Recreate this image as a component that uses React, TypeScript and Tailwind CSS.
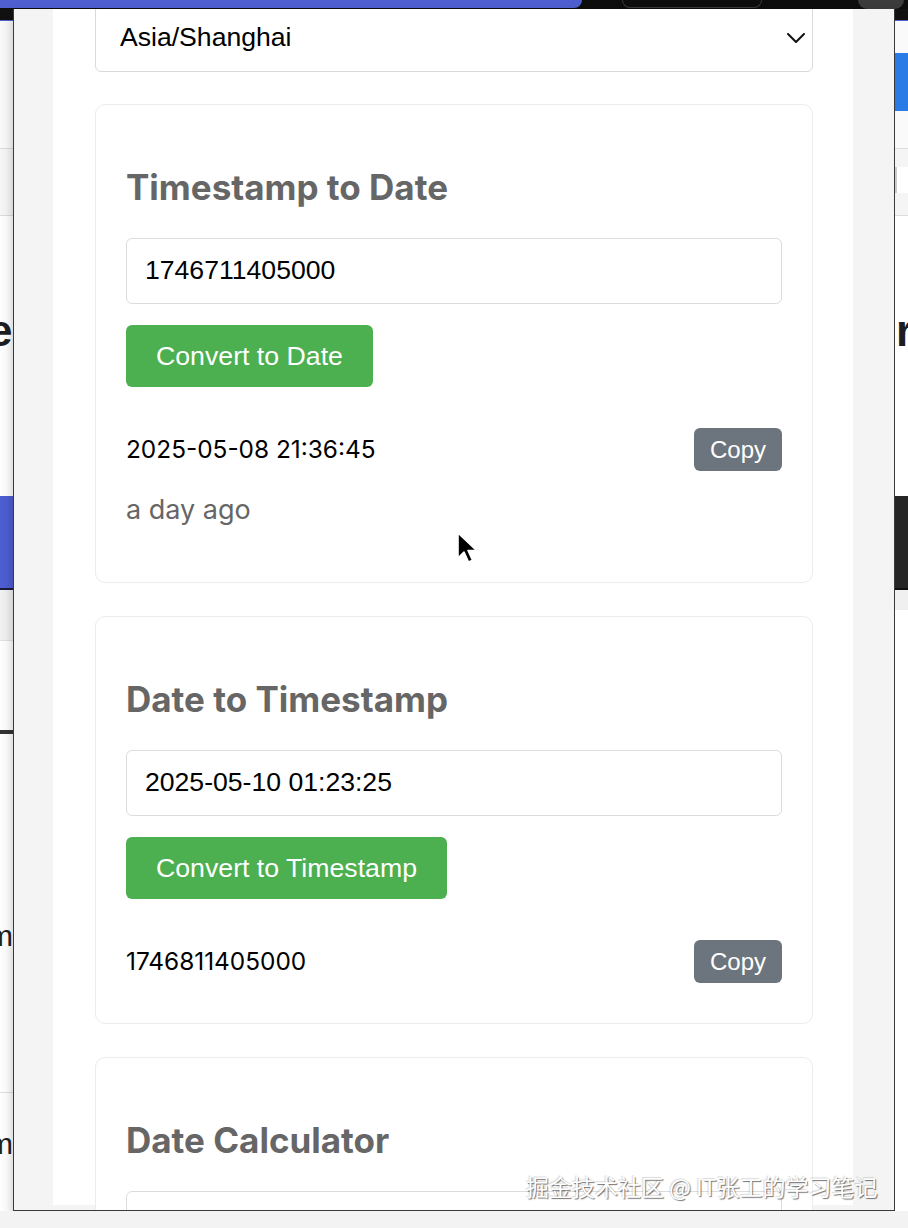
import React from 'react';

const ui = "font-['Inter','Noto_Sans',sans-serif]";
const ctl = "font-['Liberation_Sans',Arial,sans-serif]";

// thin slice of the page that sits behind the popup (left edge)
const LeftStrip: React.FC = () => (
  <div className="w-[13px] shrink-0 flex flex-col overflow-hidden bg-white">
    <div className="h-[11px] bg-[#111]" />
    <div className="h-[1px] bg-[#4f5fd0]" />
    <div className="h-[127px] bg-[#fafafa]" />
    <div className="h-[1px] bg-[#dcdcdc]" />
    <div className="h-[66px] bg-[#f7f7f7]" />
    <div className="h-[1px] bg-[#dcdcdc]" />
    <div className="h-[92px] bg-white" />
    <div className="h-[46px] bg-white overflow-hidden">
      <span className="block -ml-[12px] leading-[46px] text-[44px] font-bold text-[#1d1d22] font-['Liberation_Sans',sans-serif]">e</span>
    </div>
    <div className="h-[142px] bg-white" />
    <div className="h-[92px] bg-[#4e5ed3]" />
    <div className="h-[2px] bg-[#1b1b3a]" />
    <div className="h-[50px] bg-[#f2f2f2]" />
    <div className="h-[1px] bg-[#e2e2e2]" />
    <div className="h-[89px] bg-white" />
    <div className="h-[4px] bg-[#333]" />
    <div className="h-[182px] bg-white" />
    <div className="h-[40px] overflow-hidden">
      <span className="block -ml-[12px] leading-[40px] text-[30px] text-[#222] font-['Liberation_Sans',sans-serif]">m</span>
    </div>
    <div className="h-[136px] bg-white" />
    <div className="h-[1px] bg-[#e0e0e0]" />
    <div className="h-[31px] bg-white" />
    <div className="h-[40px] overflow-hidden">
      <span className="block -ml-[12px] leading-[40px] text-[30px] text-[#222] font-['Liberation_Sans',sans-serif]">m</span>
    </div>
    <div className="flex-1 bg-white" />
  </div>
);

const RightStrip: React.FC = () => (
  <div className="w-[13px] shrink-0 flex flex-col overflow-hidden bg-white">
    <div className="h-[11px] bg-[#111]" />
    <div className="h-[1px] bg-[#4f5fd0]" />
    <div className="h-[32px] bg-[#fafafa]" />
    <div className="h-[58px] bg-[#2b7be6]" />
    <div className="h-[37px] bg-[#fafafa]" />
    <div className="h-[1px] bg-[#dcdcdc]" />
    <div className="h-[18px] bg-[#f5f5f5]" />
    <div className="h-[26px] w-[2px] bg-[#ccc]" />
    <div className="h-[22px] bg-[#f5f5f5]" />
    <div className="h-[1px] bg-[#dcdcdc]" />
    <div className="h-[92px] bg-white" />
    <div className="h-[46px] overflow-hidden">
      <span className="block ml-[1px] leading-[46px] text-[44px] font-bold text-[#1d1d22] font-['Liberation_Sans',sans-serif]">r</span>
    </div>
    <div className="h-[142px] bg-white" />
    <div className="h-[92px] bg-[#262626]" />
    <div className="h-[2px] bg-[#111]" />
    <div className="h-[20px] bg-[#f0f0f0]" />
    <div className="flex-1 bg-white" />
  </div>
);

const CopyButton: React.FC = () => (
  <button className={`${ctl} h-[43px] px-[16px] rounded-[6px] bg-[#6c757d] text-white text-[24px] leading-none`}>
    Copy
  </button>
);

interface CardProps {
  title: string;
  className?: string;
  children?: React.ReactNode;
}

const Card: React.FC<CardProps> = ({ title, className, children }) => (
  <div className={`rounded-[10px] border border-[#ececec] bg-white px-[30px] pt-[30px] pb-[40px] ${className || ''}`}>
    <h2 className={`${ui} mt-[32px] leading-[40px] text-[35px] font-bold text-[#666]`}>{title}</h2>
    {children}
  </div>
);

const Field: React.FC<{ value: string }> = ({ value }) => (
  <div className={`${ctl} mt-[31px] h-[66px] flex items-center rounded-[6px] border border-[#dcdcdc] pl-[18px] text-[26.6px] text-black`}>
    {value}
  </div>
);

const GreenButton: React.FC<{ label: string }> = ({ label }) => (
  <button className={`${ctl} mt-[21px] h-[62px] px-[30px] rounded-[6px] bg-[#4caf50] text-white text-[26.7px] leading-none`}>
    {label}
  </button>
);

const ResultRow: React.FC<{ value: string }> = ({ value }) => (
  <div className="mt-[41px] flex items-center justify-between">
    <span className={`${ui} text-[24.4px] text-black`}>{value}</span>
    <CopyButton />
  </div>
);

export default function App() {
  return (
    <div className="relative w-[908px] h-[1228px] overflow-hidden bg-[#f3f3f3] flex flex-col">
      {/* browser chrome behind the popup */}
      <div className="h-[9px] shrink-0 bg-[#0d0d0d] flex">
        <div className="w-[582px] h-[8px] bg-[#4f5fd0] rounded-br-[14px]" />
        <div className="ml-[40px] w-[140px] h-[8px] rounded-b-[10px] border-x border-b border-[#3a3a3a]" />
        <div className="ml-[96px] w-[46px] h-[9px] rounded-b-full bg-[#3c3c3c]" />
      </div>

      <div className="h-[1202px] shrink-0 flex">
        <LeftStrip />

        {/* popup */}
        <div className="w-[882px] shrink-0 bg-[#f4f4f4] border-x border-b border-[#3a3a3a] overflow-hidden shadow-[0_6px_12px_rgba(0,0,0,0.25)]">
          <div className="ml-[39px] w-[800px] h-full bg-white pl-[42px] pr-[40px] -mt-[5px]">
            <div className="h-[68px] flex items-center justify-between rounded-[6px] border border-[#d9d9d9] pl-[24px] pr-[6px]">
              <span className={`${ctl} text-[26.6px] text-black`}>Asia/Shanghai</span>
              <svg width="20" height="12" viewBox="0 0 20 12" fill="none">
                <path d="M2 2l8 8 8-8" stroke="#111" strokeWidth="2" strokeLinecap="round" strokeLinejoin="round" />
              </svg>
            </div>

            <Card title="Timestamp to Date" className="mt-[32px]">
              <Field value="1746711405000" />
              <GreenButton label="Convert to Date" />
              <ResultRow value="2025-05-08 21:36:45" />
              <div className={`${ui} mt-[24px] mb-[17px] leading-[30px] text-[27px] text-[#666]`}>a day ago</div>
            </Card>

            <Card title="Date to Timestamp" className="mt-[33px]">
              <Field value="2025-05-10 01:23:25" />
              <GreenButton label="Convert to Timestamp" />
              <ResultRow value="1746811405000" />
            </Card>

            <Card title="Date Calculator" className="mt-[33px]">
              <div className="mt-[31px] h-[66px] rounded-[6px] border border-[#dcdcdc]" />
            </Card>
          </div>
        </div>

        <RightStrip />
      </div>

      <div className="flex-1 bg-[#f3f3f3]" />

      {/* mouse pointer */}
      <svg className="absolute left-[456px] top-[531px]" width="22" height="34" viewBox="0 0 22 34">
        <path d="M2 2v25l6-6 4.5 10 4-1.8L12 19.5h8.5z" fill="#000" stroke="#fff" strokeWidth="1.6" strokeLinejoin="round" />
      </svg>

      {/* watermark */}
      <div className="absolute left-[526px] top-[1171px] text-[23px] leading-[30px] text-white font-['Noto_Sans_CJK_SC','Noto_Sans',sans-serif] [text-shadow:1px_1px_1px_rgba(0,0,0,0.55),-1px_-1px_1px_rgba(0,0,0,0.15)]">
        掘金技术社区 @ IT张工的学习笔记
      </div>
    </div>
  );
}
